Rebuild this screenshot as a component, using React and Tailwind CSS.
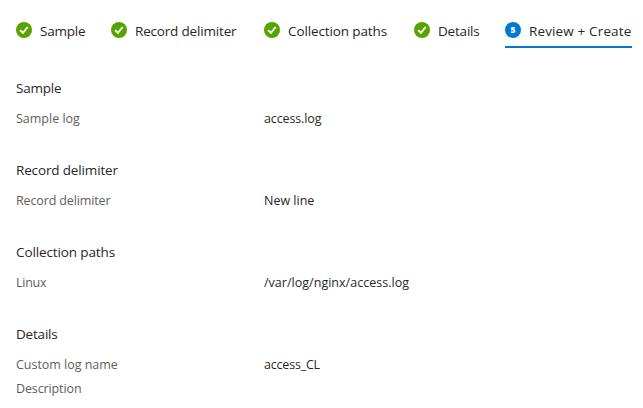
const steps = [
  { label: "Sample", box: "w-[95px]", track: "tracking-[-0.2px]" },
  { label: "Record delimiter", box: "w-[153px]", track: "tracking-[-0.18px]" },
  { label: "Collection paths", box: "w-[150px]", track: "tracking-[-0.12px]" },
  { label: "Details", box: "w-[91px]", track: "tracking-[-0.2px]" },
];

const sections = [
  { title: "Sample", track: "tracking-[-0.2px]", rows: [{ label: "Sample log", value: "access.log", lt: "tracking-[0px]", vt: "tracking-[-0.13px]" }] },
  { title: "Record delimiter", track: "tracking-[-0.15px]", rows: [{ label: "Record delimiter", value: "New line", lt: "tracking-[-0.13px]", vt: "tracking-[0px]" }] },
  { title: "Collection paths", track: "tracking-[-0.12px]", rows: [{ label: "Linux", value: "/var/log/nginx/access.log", lt: "tracking-[-0.25px]", vt: "tracking-[0.02px]" }] },
  {
    title: "Details",
    track: "tracking-[-0.2px]",
    rows: [
      { label: "Custom log name", value: "access_CL", lt: "tracking-[-0.03px]", vt: "tracking-[-0.2px]" },
      { label: "Description", value: "", lt: "tracking-[-0.12px]", vt: "tracking-[0px]" },
    ],
  },
];

function CheckBadge() {
  return (
    <svg viewBox="0 0 16 16" className="size-4 shrink-0">
      <circle cx="8" cy="8" r="8" fill="#57a300" />
      <path d="M4.1 8.1 L6.9 10.8 L11.7 5" fill="none" stroke="#fff" strokeWidth="1.9" />
    </svg>
  );
}

export default function App() {
  return (
    <div className="h-[408px] w-[643px] overflow-hidden bg-white pl-4 pt-3.5 font-['Open_Sans','Noto_Sans',sans-serif] text-[#292827]">
      <nav className="flex h-[34px] whitespace-nowrap text-[13.5px] leading-[34px]">
        {steps.map((s) => (
          <div key={s.label} className={`flex shrink-0 gap-2 ${s.box}`}>
            <span className="mt-2 flex h-4">
              <CheckBadge />
            </span>
            <span className={s.track}>{s.label}</span>
          </div>
        ))}
        <div className="flex w-[127px] shrink-0 gap-2 border-b-2 border-[#0078d4] font-medium">
          <span className="mt-2 flex size-4 shrink-0 items-center justify-center rounded-full bg-[#0078d4] text-[8.5px] leading-none font-extrabold text-white">
            5
          </span>
          <span className="tracking-[0.14px]">Review + Create</span>
        </div>
      </nav>
      <main className="pt-[30px]">
        {sections.map((s) => (
          <section key={s.title} className="mb-[27px] whitespace-nowrap">
            <h2 className={`mb-[11px] h-5 text-[13.5px] leading-5 ${s.track}`}>{s.title}</h2>
            {s.rows.map((r) => (
              <div key={r.label} className="flex h-6 text-[12.5px] leading-5">
                <span className={`w-[248px] text-[#605e5c] ${r.lt}`}>{r.label}</span>
                <span className={r.vt}>{r.value}</span>
              </div>
            ))}
          </section>
        ))}
      </main>
    </div>
  );
}
